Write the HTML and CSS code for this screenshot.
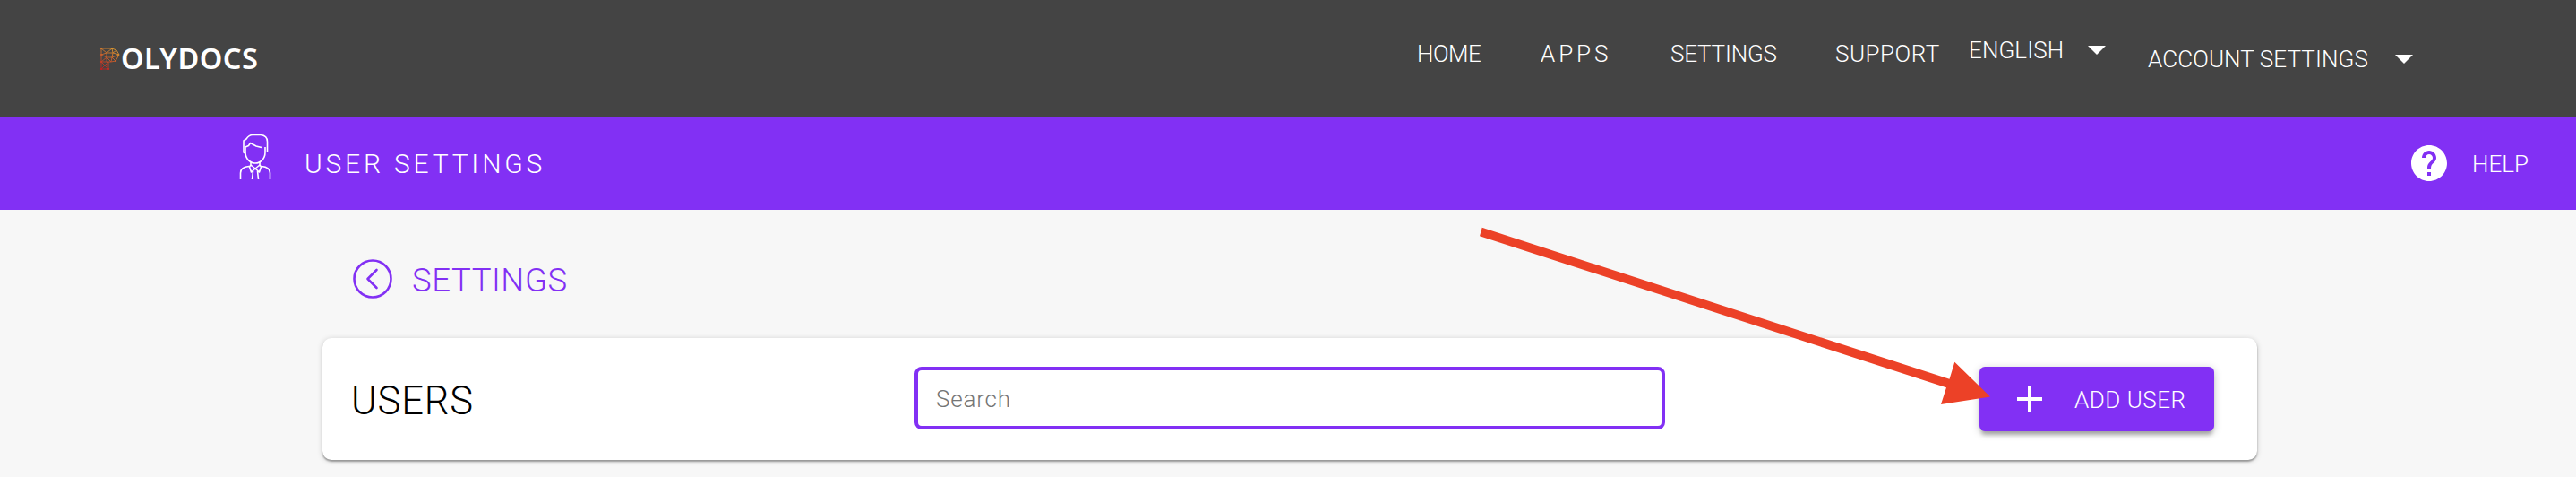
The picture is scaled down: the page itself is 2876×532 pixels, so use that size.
FILE: index.html
```
<!DOCTYPE html>
<html lang="en">
<head>
<meta charset="utf-8">
<title>Polydocs – Users</title>
<link rel="stylesheet" href="styles.css">
</head>
<body>
<header class="topbar">
  <a class="logo">
    <svg class="logo-mark" width="24" height="28" viewBox="0 0 24 28" fill="none">
      <defs>
        <linearGradient id="flame" x1="18" y1="2" x2="6" y2="26" gradientUnits="userSpaceOnUse">
          <stop offset="0" stop-color="#e0a030"/><stop offset=".5" stop-color="#c8602c"/><stop offset="1" stop-color="#c02020"/>
        </linearGradient>
      </defs>
      <path d="M3 3H15L20 5L23 10L19 17L14 18H11V26H3ZM3 3L9 8L15 3L16 8L23 10L15 13L14 18L9 13L3 18L11 26M9 8V18M9 8H16L15 13H9L3 10L9 8M3 18H11L3 26M16 8L20 5M15 13L19 17" stroke="url(#flame)" stroke-width=".9"/>
      <path d="M3 3h.1M15 3h.1M22 10h.1M19 17h.1M11 26h.1M3 26h.1M3 18h.1M3 10h.1" stroke="url(#flame)" stroke-width="2.200" stroke-linecap="round"/>
    </svg>
    <span class="logo-text">OLYDOCS</span>
  </a>
  <nav class="menu">
    <a class="item home">HOME</a>
    <a class="item apps">APPS</a>
    <a class="item settings">SETTINGS</a>
    <a class="item support">SUPPORT</a>
    <a class="item english">ENGLISH</a>
    <i class="caret caret-language"></i>
    <a class="item account">ACCOUNT SETTINGS</a>
    <i class="caret caret-account"></i>
  </nav>
</header>
<section class="titlebar">
  <svg class="user-icon" width="36" height="52" viewBox="0 0 36 52" fill="none" stroke="#fff" stroke-width="1.600" stroke-linejoin="round">
    <path d="M6 22L5 21V8L8 6C10 3 12 1.500 15 1.500H24C29 2 31.500 5 31.500 9V20"/>
    <path d="M29 15V21C29 28 24 33 18 33S7 28 7 21V15L10.500 13.500L12.500 10.500L19 14L25 15.500"/>
    <path d="M13 32V35L18 39L23 35V32M13 35L11.500 37L13.500 43L18 39L22.500 43L24.500 37L23 35M15.500 42L14.500 51M20.500 42L21.500 51M1.500 51V44C1.500 39 5 37 11 36.500M34.500 51V44C34.500 39 31 37 25 36.500"/>
  </svg>
  <h1 class="page-name">USER SETTINGS</h1>
  <a class="help">
    <svg width="48" height="48" viewBox="0 0 24 24" fill="#fff"><path d="M12 2C6.480 2 2 6.480 2 12s4.480 10 10 10 10-4.480 10-10S17.520 2 12 2zm1 17h-2v-2h2v2zm2.070-7.750l-.9.920C13.450 12.900 13 13.500 13 15h-2v-.5c0-1.100.45-2.100 1.170-2.830l1.240-1.260c.37-.36.59-.86.59-1.410 0-1.100-.9-2-2-2s-2 .9-2 2H8c0-2.210 1.790-4 4-4s4 1.790 4 4c0 .88-.36 1.680-.93 2.250z"/></svg>
    <span class="help-text">HELP</span>
  </a>
</section>
<main class="content">
  <a class="back">
    <svg width="44" height="44" viewBox="0 0 44 44" fill="none" stroke="#8230f4" stroke-width="2.600" stroke-linecap="round" stroke-linejoin="round"><circle cx="22" cy="22" r="20.500"/><path d="M26.500 12L16.500 22L26.500 32"/></svg>
    <span class="back-text">SETTINGS</span>
  </a>
  <section class="card">
    <h2 class="card-title">USERS</h2>
    <input class="search" type="text" placeholder="Search">
    <button class="add">
      <svg width="30" height="30" viewBox="0 0 30 30" stroke="#fff" stroke-width="4"><path d="M15 1V29M1 15H29"/></svg>
      <span class="add-text">ADD USER</span>
    </button>
  </section>
</main>
<svg class="arrow" width="572" height="202" viewBox="0 0 572 202" fill="#ec4127"><path d="M4.700 3.800L526.500 172.800L532.300 153.800L572 192.500L517 201L523 182.200L2 13.200Z"/></svg>
</body>
</html>
```
FILE: styles.css
```
* { box-sizing: border-box; }
body {
  margin: 0;
  height: 532px;
  overflow: hidden;
  background: #f7f7f7;
  font-family: Roboto, sans-serif;
  font-weight: 300;
}
h1, h2 { margin: 0; font-weight: inherit; }
.topbar {
  height: 130px;
  display: flex;
  justify-content: space-between;
  background: #444;
  color: #fff;
}
.logo { display: flex; align-items: flex-start; padding: 51px 0 0 110px; }
.logo-text {
  font: 600 32.500px/28px "Noto Sans", sans-serif;
  letter-spacing: .5px;
  margin: 0 0 0 1px;
}
.menu {
  display: grid;
  grid-template-columns: 138px 145px 184px 149px 133px 67px 276px 202px;
  align-items: start;
  font-size: 26px;
  line-height: 30px;
  white-space: nowrap;
}
.item { margin-top: 45px; }
.home { letter-spacing: -.5px; }
.apps { letter-spacing: 3.900px; }
.settings { letter-spacing: -.2px; }
.support { letter-spacing: .5px; }
.english { margin-top: 41px; letter-spacing: .1px; }
.account { margin-top: 51px; letter-spacing: .1px; }
.caret {
  width: 20px;
  height: 10px;
  margin-top: 51px;
  background: #fff;
  clip-path: polygon(0 0, 100% 0, 50% 100%);
}
.caret-account { margin-top: 61px; }
.titlebar {
  height: 104px;
  display: flex;
  align-items: flex-start;
  background: #8230f4;
  color: #fff;
}
.user-icon { margin: 19px 0 0 267px; }
.page-name {
  margin: 35px 0 0 37px;
  font-size: 30px;
  line-height: 36px;
  letter-spacing: 3.800px;
}
.help { display: flex; align-items: center; margin: 28px 53px 0 auto; }
.help-text { margin: 1px 0 0 24px; font-size: 26px; line-height: 30px; }
.content { padding: 55px 356px 0 360px; }
.back { display: flex; align-items: center; margin-left: 34px; color: #8230f4; }
.back-text { margin: 3px 0 0 22px; font-size: 36.500px; line-height: 41px; letter-spacing: .6px; }
.card {
  display: flex;
  align-items: flex-start;
  width: 2160px;
  height: 136px;
  margin-top: 44px;
  padding: 32px 48px 0 32px;
  border-radius: 10px;
  background: #fff;
  box-shadow: 0 2px 2px rgba(0,0,0,.32), 0 1px 6px rgba(0,0,0,.18);
}
.card-title { width: 629px; margin-top: 14px; font-size: 43.500px; line-height: 50px; letter-spacing: .9px; color: #000; }
.search {
  width: 838px;
  height: 70px;
  padding: 2px 0 0 20px;
  border: 4px solid #8230f4;
  border-radius: 8px;
  background: #fff;
  font: inherit;
  font-size: 26px;
  letter-spacing: .8px;
}
.search::placeholder { color: #757575; opacity: 1; }
.add {
  display: flex;
  align-items: center;
  width: 262px;
  height: 72px;
  margin-left: auto;
  padding: 0 0 0 41px;
  border: 0;
  border-radius: 6px;
  background: #8230f4;
  color: #fff;
  font: inherit;
  font-size: 26px;
  box-shadow: 0 6px 4px -2px rgba(0,0,0,.25), 0 2px 10px rgba(0,0,0,.22);
}
.add-text { margin: 1px 0 0 35px; letter-spacing: .5px; }
.arrow { position: absolute; left: 1650px; top: 250px; overflow: visible; }
```
